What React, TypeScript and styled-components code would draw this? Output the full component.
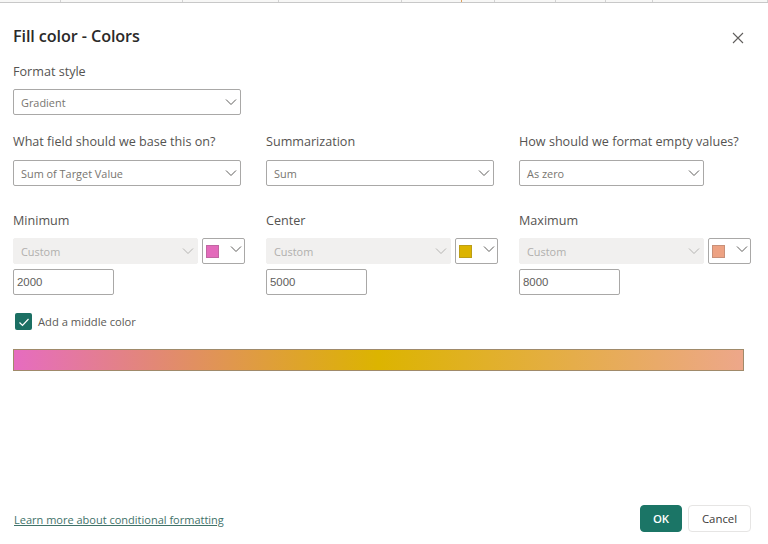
import React from "react";
import styled, { createGlobalStyle } from "styled-components";

const Global = createGlobalStyle`
  html, body { margin: 0; padding: 0; background: #fff; }
  body { width: 768px; height: 544px; overflow: hidden; font-family: "Open Sans", "Noto Sans", "Liberation Sans", sans-serif; color: #252423; }
`;

const Page = styled.div`
  width: 768px;
  height: 544px;
  display: flex;
  flex-direction: column;
  background: #fff;
  overflow: hidden;
`;

const BackStrip = styled.div`
  height: 3px;
  flex: none;
  display: flex;
  background: #f7f7f6;
  border-bottom: 1px solid #c8c8c8;
  box-sizing: border-box;
`;

const StripCell = styled.div<{ $w: number; $accent?: boolean }>`
  width: ${(p) => p.$w}px;
  flex: none;
  box-sizing: border-box;
  border-right: 1px solid ${(p) => (p.$accent ? "#e0a05a" : "#d2d2d2")};
`;

const Dialog = styled.div`
  flex: 1;
  display: flex;
  flex-direction: column;
  padding: 0 17px 12px 13px;
  min-height: 0;
`;

const Header = styled.header`
  display: flex;
  align-items: center;
  justify-content: space-between;
  height: 24px;
  margin-top: 21px;
`;

const Title = styled.h1`
  margin: 0;
  font-size: 16.2px;
  font-weight: 600;
  color: #2b2a29;
  letter-spacing: -0.1px;
`;

const CloseButton = styled.button`
  width: 14px;
  height: 14px;
  padding: 0;
  margin: 3px 6px 0 0;
  border: 0;
  background: none;
  display: flex;
  color: #605e5c;
`;

const FormatBlock = styled.section`
  margin-top: 15px;
  width: 228px;
`;

const FieldLabel = styled.label`
  display: block;
  height: 18px;
  line-height: 18px;
  font-size: 12.6px;
  color: #555351;
  white-space: nowrap;
`;

const ThreeCols = styled.div<{ $top: number }>`
  display: grid;
  grid-template-columns: 253px 253px 1fr;
  margin-top: ${(p) => p.$top}px;
`;

const Stack = styled.div`
  display: flex;
  flex-direction: column;
`;

const SelectBox = styled.div<{ $w: number; $disabled?: boolean; $top?: number }>`
  box-sizing: border-box;
  width: ${(p) => p.$w}px;
  height: 26px;
  margin-top: ${(p) => p.$top ?? 0}px;
  display: flex;
  align-items: center;
  justify-content: space-between;
  padding: 0 2px 0 7px;
  font-size: 10.9px;
  border-radius: 2px;
  border: 1px solid ${(p) => (p.$disabled ? "#f1f0ef" : "#a9a8a7")};
  background: ${(p) => (p.$disabled ? "#f1f0ef" : "#fff")};
  color: ${(p) => (p.$disabled ? "#b0afad" : "#77756f")};
  svg { color: ${(p) => (p.$disabled ? "#b5b4b2" : "#5f5e5c")}; }
`;

const ControlRow = styled.div`
  display: flex;
  gap: 4px;
  margin-top: 8px;
`;

const SwatchButton = styled.div`
  box-sizing: border-box;
  width: 43px;
  height: 26px;
  padding: 0 1px 0 3px;
  display: flex;
  align-items: center;
  justify-content: space-between;
  border: 1px solid #a9a8a7;
  border-radius: 2px;
  color: #5f5e5c;
  svg { margin-top: -4px; }
`;

const Swatch = styled.span<{ $color: string }>`
  width: 13px;
  height: 13px;
  box-sizing: border-box;
  border: 1px solid rgba(90, 90, 90, 0.25);
  background: ${(p) => p.$color};
`;

const ValueInput = styled.div`
  box-sizing: border-box;
  width: 101px;
  height: 26px;
  margin-top: 5px;
  display: flex;
  align-items: center;
  padding: 0 3px;
  font-family: "Liberation Sans", Arial, sans-serif;
  font-size: 11.4px;
  color: #605e5c;
  border: 1px solid #a9a8a7;
  border-radius: 2px;
`;

const CheckRow = styled.div`
  display: flex;
  align-items: center;
  gap: 6px;
  margin: 18px 0 0 2px;
  font-size: 11.2px;
  color: #5c5a57;
`;

const CheckBox = styled.span`
  width: 17px;
  height: 17px;
  box-sizing: border-box;
  border-radius: 2px;
  background: #1b6f63;
  display: flex;
  align-items: center;
  justify-content: center;
  color: #fff;
`;

const GradientBar = styled.div`
  box-sizing: border-box;
  width: 731px;
  height: 22px;
  margin-top: 19px;
  border: 1px solid #a08a6a;
  background: linear-gradient(90deg, #e66cc0 0%, #dcb400 50%, #eda78a 100%);
`;

const Footer = styled.footer`
  margin-top: auto;
  display: flex;
  align-items: center;
  justify-content: space-between;
`;

const HelpLink = styled.a`
  margin: 2px 0 0 1px;
  font-size: 11px;
  color: #3f7269;
  text-decoration: underline;
  white-space: nowrap;
`;

const Buttons = styled.div`
  display: flex;
  gap: 6px;
`;

const Button = styled.button<{ $primary?: boolean }>`
  box-sizing: border-box;
  height: 27px;
  width: ${(p) => (p.$primary ? 42 : 63)}px;
  padding: 0;
  font-family: inherit;
  font-size: 11.4px;
  font-weight: ${(p) => (p.$primary ? 600 : 400)};
  border-radius: 4px;
  color: ${(p) => (p.$primary ? "#fff" : "#3b3a39")};
  background: ${(p) => (p.$primary ? "#1b7566" : "#fff")};
  border: 1px solid ${(p) => (p.$primary ? "#1b7566" : "#e6e5e4")};
`;

const Chevron = () => (
  <svg width="14" height="14" viewBox="0 0 14 14" fill="none" stroke="currentColor" strokeWidth="1">
    <path d="M2 4.5 L7 9.5 L12 4.5" />
  </svg>
);

const CloseIcon = () => (
  <svg width="14" height="14" viewBox="0 0 14 14" fill="none" stroke="currentColor" strokeWidth="1.1">
    <path d="M2 2 L12 12 M12 2 L2 12" />
  </svg>
);

const CheckIcon = () => (
  <svg width="12" height="12" viewBox="0 0 12 12" fill="none" stroke="currentColor" strokeWidth="1.2">
    <path d="M1.5 6.5 L4.5 9.5 L10.5 3" />
  </svg>
);

const strip = [61, 122, 96, 123, 60, 33, 61, 50, 47, 115];

const cols = [
  { label: "Minimum", color: "#e36bbb", value: "2000" },
  { label: "Center", color: "#dcb400", value: "5000" },
  { label: "Maximum", color: "#eda283", value: "8000" },
];

export default function App() {
  return (
    <Page>
      <Global />
      <BackStrip>
        {strip.map((w, i) => (
          <StripCell key={i} $w={w} $accent={i === 4} />
        ))}
      </BackStrip>
      <Dialog>
        <Header>
          <Title>Fill color - Colors</Title>
          <CloseButton aria-label="Close">
            <CloseIcon />
          </CloseButton>
        </Header>
        <FormatBlock>
          <FieldLabel>Format style</FieldLabel>
          <SelectBox $w={228} $top={8}>
            Gradient
            <Chevron />
          </SelectBox>
        </FormatBlock>
        <ThreeCols $top={18}>
          <Stack>
            <FieldLabel>What field should we base this on?</FieldLabel>
            <SelectBox $w={228} $top={9}>
              Sum of Target Value
              <Chevron />
            </SelectBox>
          </Stack>
          <Stack>
            <FieldLabel>Summarization</FieldLabel>
            <SelectBox $w={228} $top={9}>
              Sum
              <Chevron />
            </SelectBox>
          </Stack>
          <Stack>
            <FieldLabel>How should we format empty values?</FieldLabel>
            <SelectBox $w={185} $top={9}>
              As zero
              <Chevron />
            </SelectBox>
          </Stack>
        </ThreeCols>
        <ThreeCols $top={26}>
          {cols.map((c) => (
            <Stack key={c.label}>
              <FieldLabel>{c.label}</FieldLabel>
              <ControlRow>
                <SelectBox $w={185} $disabled>
                  Custom
                  <Chevron />
                </SelectBox>
                <SwatchButton>
                  <Swatch $color={c.color} />
                  <Chevron />
                </SwatchButton>
              </ControlRow>
              <ValueInput>{c.value}</ValueInput>
            </Stack>
          ))}
        </ThreeCols>
        <CheckRow>
          <CheckBox>
            <CheckIcon />
          </CheckBox>
          Add a middle color
        </CheckRow>
        <GradientBar />
        <Footer>
          <HelpLink>Learn more about conditional formatting</HelpLink>
          <Buttons>
            <Button $primary>OK</Button>
            <Button>Cancel</Button>
          </Buttons>
        </Footer>
      </Dialog>
    </Page>
  );
}
